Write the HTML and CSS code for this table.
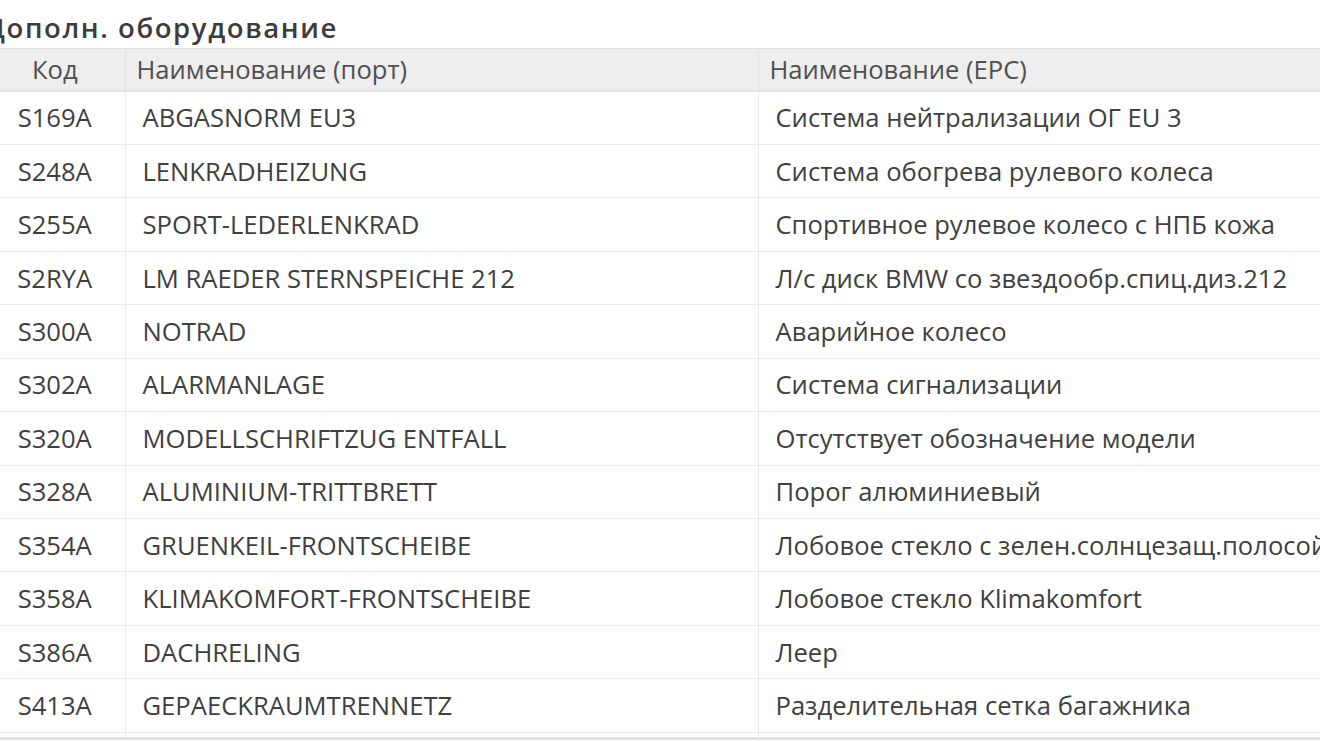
FILE: index.html
```html
<!DOCTYPE html>
<html lang="ru">
<head>
<meta charset="utf-8">
<title>Дополн. оборудование</title>
<link rel="stylesheet" href="styles.css">
</head>
<body>
<div class="page">
  <h2 class="title">Дополн. оборудование</h2>
  <table class="grid">
    <colgroup>
      <col class="c-code">
      <col class="c-port">
      <col class="c-epc">
    </colgroup>
    <thead>
      <tr><th class="code">Код</th><th>Наименование (порт)</th><th>Наименование (EPC)</th></tr>
    </thead>
    <tbody>
      <tr><td class="code">S169A</td><td>ABGASNORM EU3</td><td>Система нейтрализации ОГ EU 3</td></tr>
      <tr><td class="code">S248A</td><td>LENKRADHEIZUNG</td><td>Система обогрева рулевого колеса</td></tr>
      <tr><td class="code">S255A</td><td>SPORT-LEDERLENKRAD</td><td>Спортивное рулевое колесо с НПБ кожа</td></tr>
      <tr><td class="code">S2RYA</td><td>LM RAEDER STERNSPEICHE 212</td><td>Л/с диск BMW со звездообр.спиц.диз.212</td></tr>
      <tr><td class="code">S300A</td><td>NOTRAD</td><td>Аварийное колесо</td></tr>
      <tr><td class="code">S302A</td><td>ALARMANLAGE</td><td>Система сигнализации</td></tr>
      <tr><td class="code">S320A</td><td>MODELLSCHRIFTZUG ENTFALL</td><td>Отсутствует обозначение модели</td></tr>
      <tr><td class="code">S328A</td><td>ALUMINIUM-TRITTBRETT</td><td>Порог алюминиевый</td></tr>
      <tr><td class="code">S354A</td><td>GRUENKEIL-FRONTSCHEIBE</td><td>Лобовое стекло с зелен.солнцезащ.полосой</td></tr>
      <tr><td class="code">S358A</td><td>KLIMAKOMFORT-FRONTSCHEIBE</td><td>Лобовое стекло Klimakomfort</td></tr>
      <tr><td class="code">S386A</td><td>DACHRELING</td><td>Леер</td></tr>
      <tr><td class="code">S413A</td><td>GEPAECKRAUMTRENNETZ</td><td>Разделительная сетка багажника</td></tr>
    </tbody>
    <tfoot>
      <tr><td></td><td></td><td></td></tr>
    </tfoot>
  </table>
</div>
</body>
</html>
```

FILE: styles.css
```css
html, body {
  margin: 0;
  padding: 0;
  background: #ffffff;
  overflow: hidden;
}

body {
  font-family: "Open Sans", "Noto Sans", "DejaVu Sans", sans-serif;
  color: #3a3a3a;
}

.page {
  margin-left: -15px;
  width: 1420px;
}

.title {
  margin: 0;
  padding: 10px 0 0 0;
  height: 39px;
  box-sizing: border-box;
  font-size: 27.5px;
  font-weight: 600;
  letter-spacing: 1.6px;
  line-height: 36px;
  color: #3c3c3c;
  white-space: nowrap;
}

.grid {
  width: 1420px;
  border-collapse: collapse;
  table-layout: fixed;
  margin-top: 9px;
}

.c-code { width: 140px; }
.c-port { width: 633px; }
.c-epc { width: 647px; }

.grid th {
  background: #eeeeee;
  border-top: 1px solid #e0e0e0;
  border-bottom: 2px solid #e3e3e3;
  border-left: 1px solid #e2e2e2;
  height: 38.5px;
  padding: 2px 11px 0;
  font-size: 25.6px;
  font-weight: 400;
  color: #505050;
  text-align: left;
  white-space: nowrap;
  line-height: 30px;
  box-sizing: content-box;
}

.grid tbody td {
  border-bottom: 1px solid #ececec;
  border-left: 1px solid #ececec;
  height: 51.45px;
  padding: 1px 17px 0;
  font-size: 25.6px;
  color: #3f3f3f;
  white-space: nowrap;
  overflow: hidden;
  line-height: 30px;
  box-sizing: content-box;
}

.grid tfoot td {
  height: 30px;
  padding: 0;
  border-left: 1px solid #ececec;
  background: linear-gradient(to bottom, transparent 5px, #d6d6d6 5px, #d6d6d6 7px, transparent 7px);
}

.grid th:first-child,
.grid td:first-child {
  border-left: none;
}

.grid .code {
  text-align: center;
  padding-left: 0;
  padding-right: 0;
}
```
